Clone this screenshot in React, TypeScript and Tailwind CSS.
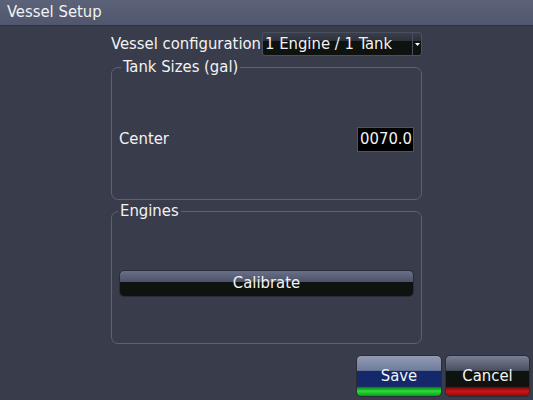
const FONT = "font-['DejaVu_Sans_Condensed','DejaVu_Sans',sans-serif] [font-stretch:semi-condensed]";

// 下半分が黒いグラデーションボタン（Calibrate / Save / Cancel 共通）
function GlossButton({
  label,
  className,
  face,
}: {
  label: string;
  className: string;
  face: string;
}) {
  return (
    <button className={`flex items-center justify-center rounded-[5px] text-[16.5px] text-[#f4f4f4] ${face} ${className}`}>
      {label}
    </button>
  );
}

export default function App() {
  return (
    <div className={`flex h-[400px] w-[533px] flex-col bg-[#393c4b] ${FONT} text-[16.5px] text-[#f2f2f2]`}>
      <div className="flex h-[26px] items-center border-b border-[#2e3140] bg-[linear-gradient(to_bottom,#5c6379,#4f566d)] px-[7px]">
        Vessel Setup
      </div>

      <div className="flex w-[311px] flex-col self-center">
        <div className="mt-[6px] flex h-[24px] items-center whitespace-nowrap">
          <span className="flex-1 pt-[1px] text-right leading-none">Vessel configuration</span>
          <div className="ml-[1px] flex h-[24px] w-[160px] items-center rounded-[3px] border border-[#4b505e] bg-[linear-gradient(to_bottom,#3a3f4c_0%,#2c303a_38%,#0f130f_38%,#0f130f_100%)]">
            <span className="flex-1 pl-[2px] pt-[1px] leading-none">1 Engine / 1 Tank</span>
            <span className="flex h-full w-[9px] items-center justify-center border-l border-[#4b505e]">
              <svg width="5" height="3" viewBox="0 0 5 3">
                <path d="M0 0H5L2.5 3Z" fill="#ffffff" />
              </svg>
            </span>
          </div>
        </div>

        <fieldset className="mt-[2px] h-[142px] rounded-[7px] border border-[#5d6170]">
          <legend className="ml-[9px] px-[2px] leading-[18px]">Tank Sizes (gal)</legend>
          <div className="flex h-[123px] items-center justify-between px-[7px] pt-[4px]">
            <span>Center</span>
            <div className="flex h-[25px] w-[57px] items-center justify-end border border-[#50545f] bg-black pr-[1px]">
              0070.0
            </div>
          </div>
        </fieldset>

        <fieldset className="mt-[2px] h-[142px] rounded-[7px] border border-[#5d6170]">
          <legend className="ml-[6px] px-[2px] leading-[18px]">Engines</legend>
          <div className="flex h-[123px] items-center px-[7px] pt-[4px]">
            <GlossButton
              label="Calibrate"
              className="h-[27px] w-full border border-[#2a2d38]"
              face="bg-[linear-gradient(to_bottom,#6a7088_0%,#4d536a_42%,#0f130f_42%,#0f130f_100%)]"
            />
          </div>
        </fieldset>
      </div>

      <div className="mt-auto flex justify-end gap-[3px] pb-[3px] pr-[3px]">
        <GlossButton
          label="Save"
          className="h-[42px] w-[86px] border border-[#2a2d38]"
          face="bg-[linear-gradient(to_bottom,#939bb2_0%,#6f7c9c_36%,#14286a_38%,#14286a_76%,#0c7a1c_78%,#28e035_88%,#0c9a1e_100%)]"
        />
        <GlossButton
          label="Cancel"
          className="h-[42px] w-[85px] border border-[#2a2d38]"
          face="bg-[linear-gradient(to_bottom,#7a8094_0%,#4a4f60_36%,#0f130f_38%,#0f130f_76%,#6a0a0a_78%,#d01616_88%,#8a0c0c_100%)]"
        />
      </div>
    </div>
  );
}
